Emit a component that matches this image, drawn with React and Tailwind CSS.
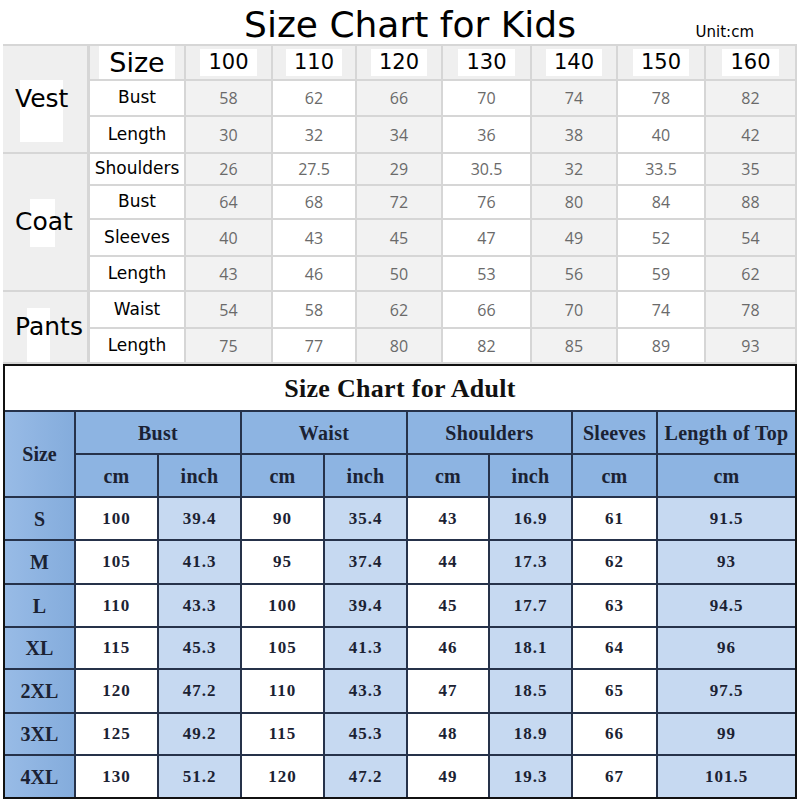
const SIZES = ["100", "110", "120", "130", "140", "150", "160"];

// filas del cuadro de niños: categoría (solo en la primera fila del grupo), etiqueta y medidas
const KIDS_ROWS = [
  { cat: "Vest", span: "row-span-3", box: "left-[17px] top-[34px] w-[43px] h-[62px]", label: "Bust", vals: ["58", "62", "66", "70", "74", "78", "82"] },
  { label: "Length", vals: ["30", "32", "34", "36", "38", "40", "42"] },
  { cat: "Coat", span: "row-span-4", box: "left-[27px] top-[45px] w-[25px] h-[48px]", label: "Shoulders", vals: ["26", "27.5", "29", "30.5", "32", "33.5", "35"] },
  { label: "Bust", vals: ["64", "68", "72", "76", "80", "84", "88"] },
  { label: "Sleeves", vals: ["40", "43", "45", "47", "49", "52", "54"] },
  { label: "Length", vals: ["43", "46", "50", "53", "56", "59", "62"] },
  { cat: "Pants", span: "row-span-2", box: "left-[24px] top-[16px] w-[23px] h-[54px]", label: "Waist", vals: ["54", "58", "62", "66", "70", "74", "78"] },
  { label: "Length", vals: ["75", "77", "80", "82", "85", "89", "93"] },
];

const ADULT_ROWS = [
  ["S", "100", "39.4", "90", "35.4", "43", "16.9", "61", "91.5"],
  ["M", "105", "41.3", "95", "37.4", "44", "17.3", "62", "93"],
  ["L", "110", "43.3", "100", "39.4", "45", "17.7", "63", "94.5"],
  ["XL", "115", "45.3", "105", "41.3", "46", "18.1", "64", "96"],
  ["2XL", "120", "47.2", "110", "43.3", "47", "18.5", "65", "97.5"],
  ["3XL", "125", "49.2", "115", "45.3", "48", "18.9", "66", "99"],
  ["4XL", "130", "51.2", "120", "47.2", "49", "19.3", "67", "101.5"],
];

const kidsFont = { fontFamily: '"DejaVu Sans", sans-serif' };
const cellK = "flex items-center justify-center border-b-2 border-r-2 border-[#d6d6d6]";
const cellA = "flex items-center justify-center border-[#26324a]";

function KidsChart() {
  return (
    <div
      className="mx-[3px] grid grid-cols-[87px_96px_87px_84px_86px_89px_86px_88px_91px] grid-rows-[35px_36px_37px_32px_34px_37px_35px_37px_35px] border-t-2 border-[#d6d6d6]"
      style={kidsFont}
    >
      {KIDS_ROWS.map((fila, i) => (
        <div key={i} className="contents">
          {fila.cat && (
            <div className={`relative ${fila.span} flex items-center border-b-2 border-r-[3px] border-[#d6d6d6] bg-[#efefef] pl-3`}>
              <span className={`absolute ${fila.box} bg-white`} />
              <span className="relative text-[25px] text-black">{fila.cat}</span>
            </div>
          )}
          {i === 0 && (
            <>
              <div className={`${cellK} bg-[#efefef]`}>
                <span className="bg-white px-2.5 text-[27px] leading-[33px] text-black">Size</span>
              </div>
              {SIZES.map((s) => (
                <div key={s} className={`${cellK} bg-[#efefef]`}>
                  <span className="bg-white px-2 text-[21px] leading-[27px] text-black">{s}</span>
                </div>
              ))}
            </>
          )}
          <div className={`${cellK} bg-white text-[17px] text-black`}>{fila.label}</div>
          {fila.vals.map((v, j) => (
            <div
              key={j}
              className={`${cellK} ${j % 2 === 0 ? "bg-[#f2f2f2]" : "bg-white"} text-[16px] text-[#6a6a6a]`}
              style={{ fontFamily: '"Open Sans", sans-serif' }}
            >
              {v}
            </div>
          ))}
        </div>
      ))}
    </div>
  );
}

function AdultChart() {
  const azul = "bg-[#8db4e2]";
  const celeste = "bg-[#c6d9f1]";
  const lado = "bg-gradient-to-r from-[#98bbe6] to-[#84acdc]";
  const ultimaFila = ADULT_ROWS.length - 1;
  return (
    <div
      className="mx-[3px] grid grid-cols-[71px_83px_83px_83px_83px_82px_83px_85px_137px] grid-rows-[46px_43px_43px_43px_44px_43px_42px_44px_42px_41px] border-2 border-[#111]"
      style={{ fontFamily: '"Liberation Serif", serif' }}
    >
      <div className="col-span-9 flex items-center justify-center border-b-2 border-[#26324a] bg-white text-[26px] font-bold tracking-[0.3px] text-[#111]">
        Size Chart for Adult
      </div>

      <div className={`${cellA} row-span-2 border-b-2 border-r-2 ${lado} text-[20px] font-bold text-[#1b2233]`}>Size</div>
      {[["Bust", 2], ["Waist", 2], ["Shoulders", 2], ["Sleeves", 1], ["Length of Top", 1]].map(([t, n], k) => (
        <div
          key={t}
          className={`${cellA} border-b-2 ${k < 4 ? "border-r-2" : ""} ${azul} ${n === 2 ? "col-span-2" : ""} whitespace-nowrap text-[20px] font-bold tracking-[0.3px] text-[#1b2233]`}
        >
          {t}
        </div>
      ))}
      {["cm", "inch", "cm", "inch", "cm", "inch", "cm", "cm"].map((t, k) => (
        <div key={k} className={`${cellA} border-b-2 ${k < 7 ? "border-r-2" : ""} ${azul} text-[20px] font-bold tracking-[0.3px] text-[#1b2233]`}>
          {t}
        </div>
      ))}

      {ADULT_ROWS.map((fila, i) => (
        <div key={fila[0]} className="contents">
          {fila.map((v, k) => {
            const borde = `${i < ultimaFila ? "border-b-2" : ""} ${k < 8 ? "border-r-2" : ""}`;
            if (k === 0) {
              return (
                <div key={k} className={`${cellA} ${borde} ${lado} text-[20px] font-bold text-[#1b2233]`}>
                  {v}
                </div>
              );
            }
            const fondo = k === 2 || k === 4 || k === 6 || k === 8 ? celeste : "bg-white";
            return (
              <div key={k} className={`${cellA} ${borde} ${fondo} text-[17px] font-bold tracking-[1px] text-[#1b2233]`}>
                {v}
              </div>
            );
          })}
        </div>
      ))}
    </div>
  );
}

export default function App() {
  return (
    <div className="h-[800px] w-[800px] overflow-hidden bg-white">
      <div className="grid h-[44px] grid-cols-[1fr_auto_1fr]" style={kidsFont}>
        <div />
        <h1 className="pl-5 pt-[7px] text-[36px] leading-[36px] text-black">Size Chart for Kids</h1>
        <div className="flex items-end justify-end pb-[1px] pr-[46px]">
          <span className="text-[15px] text-black">Unit:cm</span>
        </div>
      </div>
      <KidsChart />
      <AdultChart />
    </div>
  );
}
